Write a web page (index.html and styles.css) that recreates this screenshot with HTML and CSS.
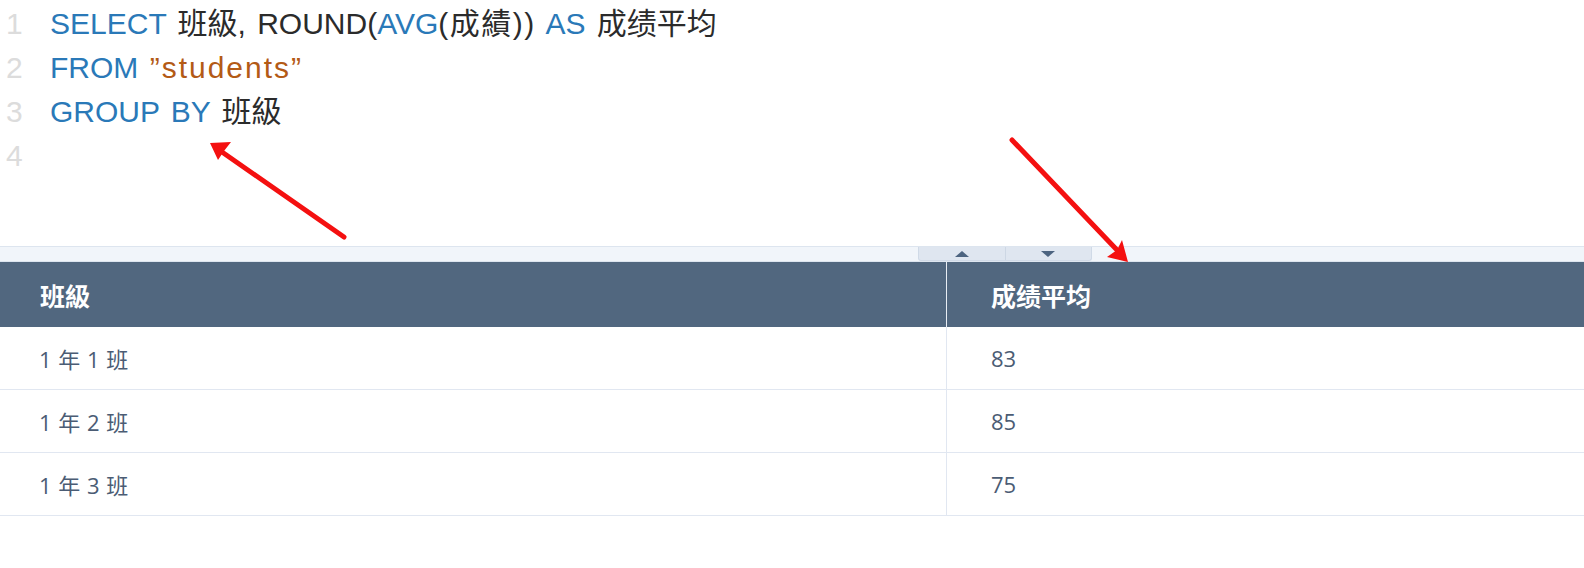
FILE: index.html
```html
<!DOCTYPE html>
<html>
<head>
<meta charset="utf-8">
<link rel="stylesheet" href="styles.css">
</head>
<body>
<div class="page">
  <div class="editor">
    <div class="line"><span class="ln">1</span><span class="code"><span class="kw">SELECT</span> 班級, ROUND(<span class="kw">AVG</span><span class="paren">(成績))</span> <span class="kw">AS</span> 成绩平均</span></div>
    <div class="line"><span class="ln">2</span><span class="code"><span class="kw">FROM</span> <span class="str">”students”</span></span></div>
    <div class="line"><span class="ln">3</span><span class="code"><span class="kw">GROUP BY</span> 班級</span></div>
    <div class="line"><span class="ln">4</span><span class="code"></span></div>
  </div>
  <div class="splitter">
    <div class="split-btns">
      <div class="sbtn"><span class="tri-up"></span></div>
      <div class="sbtn"><span class="tri-down"></span></div>
    </div>
  </div>
  <div class="table">
    <div class="row head">
      <div class="cell c1">班級</div>
      <div class="cell c2">成绩平均</div>
    </div>
    <div class="row">
      <div class="cell c1">1 年 1 班</div>
      <div class="cell c2">83</div>
    </div>
    <div class="row">
      <div class="cell c1">1 年 2 班</div>
      <div class="cell c2">85</div>
    </div>
    <div class="row">
      <div class="cell c1">1 年 3 班</div>
      <div class="cell c2">75</div>
    </div>
  </div>
  <svg class="arrows" width="1584" height="568" viewBox="0 0 1584 568">
    <g stroke="#f41010" stroke-width="5" stroke-linecap="round">
      <line x1="344" y1="237" x2="222" y2="152"/>
      <line x1="1012" y1="140" x2="1117" y2="250"/>
    </g>
    <g fill="#f41010">
      <polygon points="210,143 231,142 224,151 218,160"/>
      <polygon points="1128,262 1107,257 1117,250 1122,240"/>
    </g>
  </svg>
</div>
</body>
</html>
```
FILE: styles.css
```css
html, body {
  margin: 0;
  padding: 0;
  background: #ffffff;
}
.page {
  position: relative;
  width: 1584px;
  height: 568px;
  overflow: hidden;
}
.editor {
  height: 246px;
  padding-top: 2px;
  box-sizing: border-box;
  font-family: "Liberation Sans", "Noto Sans CJK SC", sans-serif;
  font-size: 30px;
}
.line {
  display: flex;
  height: 44px;
  line-height: 44px;
  white-space: pre;
}
.ln {
  width: 50px;
  padding-left: 6px;
  box-sizing: border-box;
  color: #dcdcdc;
}
.code {
  color: #2b2b2b;
  word-spacing: 3px;
}
.kw {
  color: #2a79b8;
}
.paren {
  letter-spacing: 1.5px;
}
.str {
  color: #b35a16;
  letter-spacing: 2px;
}
.splitter {
  height: 16px;
  box-sizing: border-box;
  background: #f1f5fa;
  border-top: 1px solid #dde5ef;
  border-bottom: 1px solid #dde5ef;
  display: flex;
  padding-left: 918px;
}
.split-btns {
  display: flex;
  width: 174px;
  height: 14px;
  background: #dfe6f0;
  border: 1px solid #d0dae7;
  border-top: none;
  border-radius: 0 0 3px 3px;
  box-sizing: border-box;
}
.sbtn {
  flex: 1;
  display: flex;
  align-items: center;
  justify-content: center;
}
.sbtn + .sbtn {
  border-left: 1px solid #cdd7e4;
}
.tri-up {
  width: 0;
  height: 0;
  border-left: 7px solid transparent;
  border-right: 7px solid transparent;
  border-bottom: 6px solid #4d6480;
}
.tri-down {
  width: 0;
  height: 0;
  border-left: 7px solid transparent;
  border-right: 7px solid transparent;
  border-top: 6px solid #4d6480;
}
.table {
  font-family: "Open Sans", "Noto Sans CJK SC", sans-serif;
}
.row {
  display: flex;
  height: 63px;
  border-bottom: 1px solid #e1e7f1;
  box-sizing: border-box;
  color: #4b5c74;
  font-size: 22px;
  word-spacing: 1px;
}
.row.head {
  height: 65px;
  background: #51677f;
  color: #ffffff;
  font-weight: bold;
  font-size: 25px;
  border-bottom: none;
}
.cell {
  display: flex;
  align-items: center;
  box-sizing: border-box;
}
.c1 {
  width: 947px;
  padding-left: 39px;
  border-right: 1px solid #e1e7f1;
}
.head .c1 {
  padding-left: 40px;
  border-right: 1px solid #e8edf4;
}
.c2 {
  flex: 1;
  padding-left: 44px;
}
.arrows {
  position: absolute;
  left: 0;
  top: 0;
  pointer-events: none;
}
```
